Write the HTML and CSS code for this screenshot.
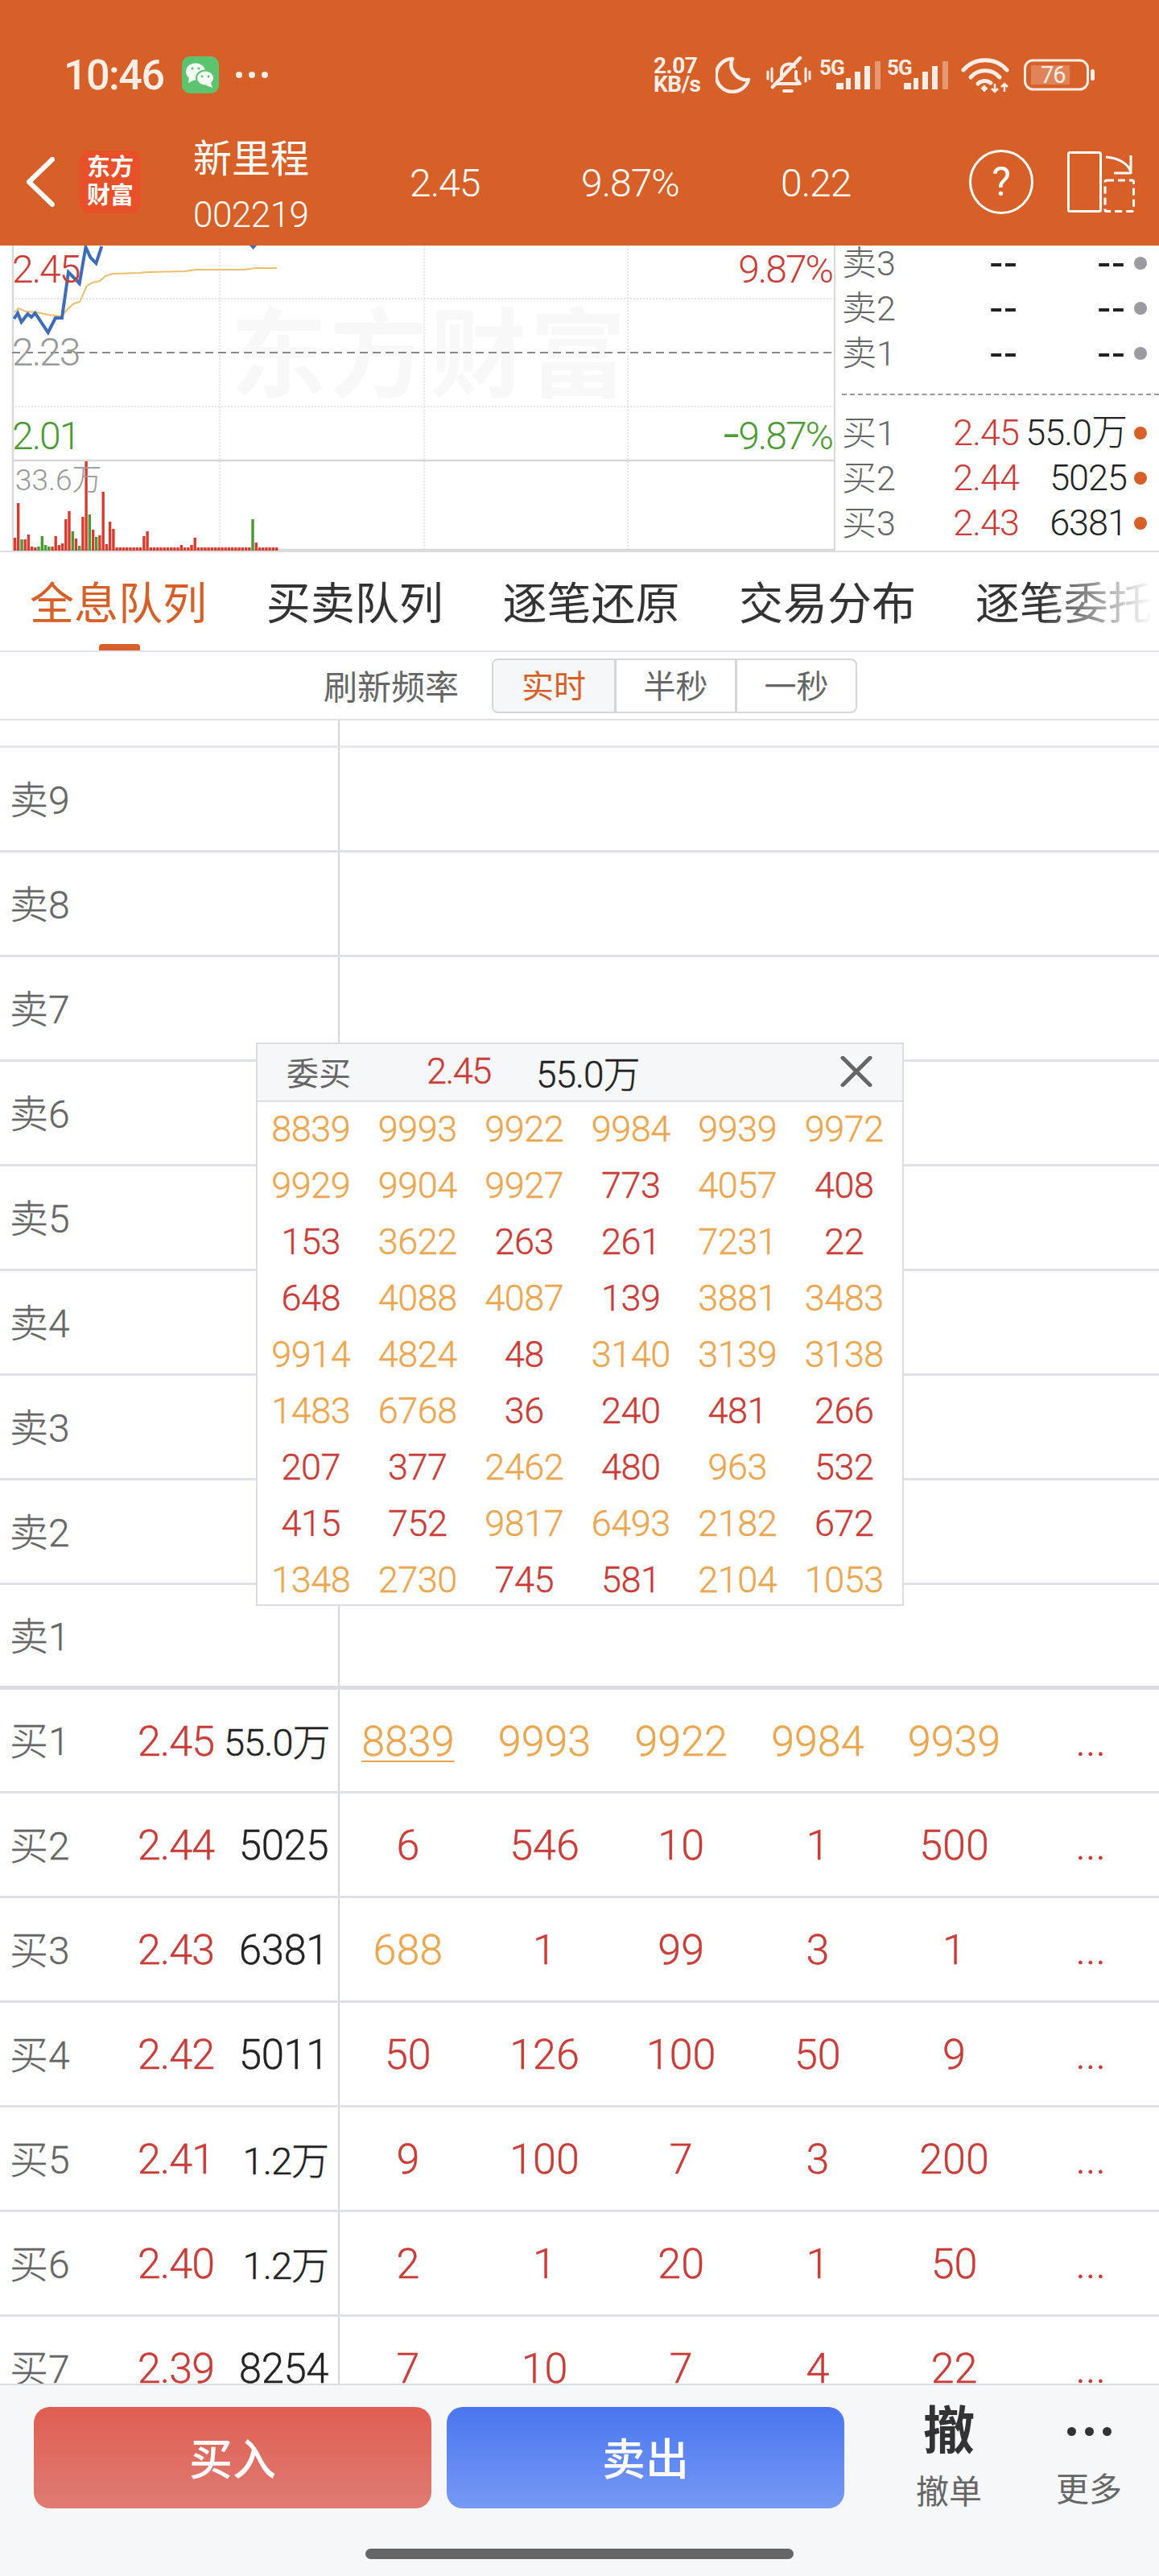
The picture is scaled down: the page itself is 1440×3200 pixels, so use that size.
FILE: index.html
```html
<!DOCTYPE html>
<html lang="zh">
<head>
<meta charset="utf-8">
<title>新里程 002219</title>
<link rel="stylesheet" href="styles.css">
</head>
<body>
<div class="app">
  <header class="header">
    <div class="status">
      <span class="time">10:46</span>
      <svg class="wechat" viewBox="0 0 46 46" width="46" height="46"><rect width="46" height="46" rx="10" fill="#5CC46E"/><ellipse cx="17" cy="19" rx="12" ry="10.5" fill="#F4FBF5"/><path d="M9 26l-1 7 8-4z" fill="#F4FBF5"/><ellipse cx="29" cy="27" rx="11" ry="9.5" fill="#F4FBF5" stroke="#5CC46E" stroke-width="2"/><path d="M36 33l2 6-8-3z" fill="#F4FBF5"/><circle cx="13" cy="15" r="1.6" fill="#5CC46E"/><circle cx="21" cy="15" r="1.6" fill="#5CC46E"/><circle cx="25" cy="25" r="1.4" fill="#5CC46E"/><circle cx="33" cy="25" r="1.4" fill="#5CC46E"/></svg>
      <svg class="more-dots" viewBox="0 0 40 10" width="40" height="10"><circle cx="4" cy="5" r="4"/><circle cx="20" cy="5" r="4"/><circle cx="36" cy="5" r="4"/></svg>
      <div class="speed"><span>2.07</span><span>KB/s</span></div>
      <svg class="moon" viewBox="0 0 44 46" width="44" height="46"><path d="M21 3A20.500 20.500 0 1 0 41 29 A19 19 0 0 1 21 3Z" fill="none" stroke="#FCEEE6" stroke-width="4.500" stroke-linejoin="round"/></svg>
      <svg class="bell" viewBox="0 0 56 46" width="56" height="46" fill="none" stroke="#FCEEE6" stroke-width="4" stroke-linecap="round" stroke-linejoin="round"><path d="M19 28V19a9 9 0 0 1 16-6M37 19v9l5 6H12"/><path d="M42 2L8 38" stroke-width="4.500"/><path d="M22 43h10"/><path d="M2 19v9M7 15v16M49 15v16M54 19v9" stroke-width="3"/></svg>
      <svg class="signal" viewBox="0 0 76 46" width="76" height="46"><text class="net" x="0" y="23">5G</text><path d="M21 33h9v8h-9z" class="sig"/><path d="M33 27h6v14h-6z" class="sig"/><path d="M44 19h7v22h-7z" class="sig"/><path d="M56 12h7v29h-7z" class="sig"/><path d="M69 6h7v35h-7z" class="sig faded"/></svg>
      <svg class="signal second" viewBox="0 0 76 46" width="76" height="46"><text class="net" x="0" y="23">5G</text><path d="M21 33h9v8h-9z" class="sig"/><path d="M33 27h6v14h-6z" class="sig"/><path d="M44 19h7v22h-7z" class="sig"/><path d="M56 12h7v29h-7z" class="sig"/><path d="M69 6h7v35h-7z" class="sig faded"/></svg>
      <svg class="wifi" viewBox="0 0 60 46" width="60" height="46" fill="none" stroke="#FCEEE6" stroke-width="5" stroke-linecap="round"><path d="M3 17a36 36 0 0 1 54 0"/><path d="M12 26a24 24 0 0 1 36 0"/><path d="M21 34a12 12 0 0 1 16-1"/><path d="M29 36l4 4-4 4-4-4z" fill="#FCEEE6" stroke-width="1"/><path d="M42 34v10M54 44V34M50 38l4-4 4 4M38 40l4 4 4-4" stroke-width="2.500" stroke-linecap="butt"/></svg>
      <svg class="battery" viewBox="0 0 88 46" width="88" height="46"><rect x="1.500" y="5" width="78" height="36" rx="10" fill="none" stroke="#FCEEE6" stroke-width="3"/><rect x="9" y="11" width="48" height="24" fill="#FCEEE6" fill-opacity=".25"/><text class="batt" x="21" y="33">76</text><rect x="83" y="16" width="5" height="14" rx="2.500" fill="#FCEEE6"/></svg>
    </div>
    <nav class="nav">
      <svg class="back" viewBox="0 0 36 62" width="36" height="62"><path d="M33 3L4 31l29 28" fill="none" stroke="#fff" stroke-width="6" stroke-linecap="round" stroke-linejoin="round"/></svg>
      <div class="logo"><span>东方</span><span>财富</span></div>
      <div class="name"><span class="stock">新里程</span><span class="code">002219</span></div>
      <span class="nav-num price">2.45</span>
      <span class="nav-num pct">9.87%</span>
      <span class="nav-num chg">0.22</span>
      <svg class="help" viewBox="0 0 80 80" width="80" height="80"><circle cx="40" cy="40" r="38.500" fill="none" stroke="#fff" stroke-width="3"/><text class="help-mark" x="40" y="57">?</text></svg>
      <svg class="split" viewBox="0 0 84 76" width="84" height="76" fill="none" stroke="#fff" stroke-width="3"><rect x="1.500" y="1.500" width="40" height="73" rx="2"/><rect x="47" y="36" width="35.500" height="38.500" rx="2" stroke-dasharray="9 5"/><path d="M48 7c15 1 28 8 31 19M79 5v23M58 27h21"/></svg>
    </nav>
  </header>

  <section class="chart">
    <div class="canvas">
      <div class="watermark">东方财富</div>
      <svg class="plot" viewBox="0 305 1036 379" width="1036" height="379">
        <path class="dotted" d="M15 371H1036M15 505H1036"/>
        <path class="dotted" d="M273 305V684M527 305V684M780 305V684"/>
        <path class="solid-grid" d="M16 572H1036M16 683H1036M16 305V684"/>
        <path class="mid" d="M15 438H1036"/>
        <polyline class="avg" points="18,388 23,383 32,387 46,388 60,391 76,393 85,383 92,377 99,375 108,355 115,351 124,349 131,343 140,340 174,339 184,338 230,337 243,335 303,335 317,333 344,333"/>
        <polyline class="line" points="17.400,396 22,389 26.600,400 34.400,390 39,394 43.600,389 59.700,413 68.900,395 77,395 85,338 98.700,352 106.500,307 112.500,320 119.400,327 126.300,306"/>
        <path class="blip" d="M310 305h9l-4.500 5z"/>
        <path class="vol-r" d="M18.500 684V668M22.700 684V625M31.200 684V670M35.400 684V664M39.600 684V679M43.800 684V680M65 684V679M69.200 684V666M73.400 684V677M77.600 684V675M81.800 684V645M86 684V635M94.500 684V669M102.900 684V642M107.100 684V573M115.600 684V658M123.900 684V665M128.200 684V611M132.400 684V676M136.600 684V648M140.900 684V657M145.100 684V680M149.300 684V680M153.500 684V680M157.700 684V680M162 684V680M166.200 684V680M170.400 684V680M174.600 684V680M178.900 684V666M183.100 684V660M187.300 684V680M191.500 684V680M195.800 684V680M200 684V680M204.200 684V680M208.400 684V680M212.700 684V680M216.900 684V680M221.100 684V680M225.300 684V677M229.500 684V680M233.800 684V680M238 684V677M242.200 684V668M246.400 684V680M250.700 684V680M254.900 684V680M259.100 684V680M263.300 684V680M267.600 684V680M271.800 684V680M276 684V680M280.200 684V680M284.500 684V680M288.700 684V680M292.900 684V680M297.100 684V680M301.300 684V680M305.600 684V680M309.800 684V680M318.300 684V674M322.500 684V680M326.700 684V680M330.900 684V680M335.100 684V680M339.400 684V680M343.600 684V680"/>
        <path class="vol-g" d="M27 684V670M48 684V679M52.300 684V666M56.500 684V677M60.700 684V679M90.300 684V660M98.700 684V678M111.300 684V639M119.700 684V667M314 684V645"/>
      </svg>
      <span class="axis up left-top">2.45</span>
      <span class="axis base left-mid">2.23</span>
      <span class="axis down left-low">2.01</span>
      <span class="axis up right-top">9.87%</span>
      <span class="axis down right-low"><span class="minus">-</span>9.87%</span>
      <span class="vol-label">33.6万</span>
    </div>
    <aside class="book">
      <div class="book-row"><span class="b-label">卖3</span><span class="b-price dash">--</span><span class="b-vol dash">--</span><i class="dot idle"></i></div>
      <div class="book-row"><span class="b-label">卖2</span><span class="b-price dash">--</span><span class="b-vol dash">--</span><i class="dot idle"></i></div>
      <div class="book-row"><span class="b-label">卖1</span><span class="b-price dash">--</span><span class="b-vol dash">--</span><i class="dot idle"></i></div>
      <div class="book-sep"></div>
      <div class="book-row"><span class="b-label">买1</span><span class="b-price">2.45</span><span class="b-vol">55.0万</span><i class="dot live"></i></div>
      <div class="book-row"><span class="b-label">买2</span><span class="b-price">2.44</span><span class="b-vol">5025</span><i class="dot live"></i></div>
      <div class="book-row"><span class="b-label">买3</span><span class="b-price">2.43</span><span class="b-vol">6381</span><i class="dot live"></i></div>
    </aside>
  </section>

  <div class="tabs">
    <span class="tab active">全息队列</span>
    <span class="tab">买卖队列</span>
    <span class="tab">逐笔还原</span>
    <span class="tab">交易分布</span>
    <span class="tab">逐笔委托</span>
  </div>

  <div class="freq">
    <span class="freq-label">刷新频率</span>
    <div class="seg"><span class="seg-item on">实时</span><span class="seg-item">半秒</span><span class="seg-item">一秒</span></div>
  </div>

  <main class="queue">
    <div class="sliver"></div>
    <div class="row"><div class="side"><span class="lab">卖9</span></div></div>
    <div class="row"><div class="side"><span class="lab">卖8</span></div></div>
    <div class="row"><div class="side"><span class="lab">卖7</span></div></div>
    <div class="row"><div class="side"><span class="lab">卖6</span></div></div>
    <div class="row"><div class="side"><span class="lab">卖5</span></div></div>
    <div class="row"><div class="side"><span class="lab">卖4</span></div></div>
    <div class="row"><div class="side"><span class="lab">卖3</span></div></div>
    <div class="row"><div class="side"><span class="lab">卖2</span></div></div>
    <div class="row last-sell"><div class="side"><span class="lab">卖1</span></div></div>

    <div class="row first-buy"><div class="side"><span class="lab">买1</span><span class="pri">2.45</span><span class="vol wan">55.0万</span></div><span class="q a first">8839</span><span class="q a">9993</span><span class="q a">9922</span><span class="q a">9984</span><span class="q a">9939</span><span class="q r">...</span></div>
    <div class="row"><div class="side"><span class="lab">买2</span><span class="pri">2.44</span><span class="vol">5025</span></div><span class="q r">6</span><span class="q r">546</span><span class="q r">10</span><span class="q r">1</span><span class="q r">500</span><span class="q r">...</span></div>
    <div class="row"><div class="side"><span class="lab">买3</span><span class="pri">2.43</span><span class="vol">6381</span></div><span class="q a">688</span><span class="q r">1</span><span class="q r">99</span><span class="q r">3</span><span class="q r">1</span><span class="q r">...</span></div>
    <div class="row"><div class="side"><span class="lab">买4</span><span class="pri">2.42</span><span class="vol">5011</span></div><span class="q r">50</span><span class="q r">126</span><span class="q r">100</span><span class="q r">50</span><span class="q r">9</span><span class="q r">...</span></div>
    <div class="row"><div class="side"><span class="lab">买5</span><span class="pri">2.41</span><span class="vol wan">1.2万</span></div><span class="q r">9</span><span class="q r">100</span><span class="q r">7</span><span class="q r">3</span><span class="q r">200</span><span class="q r">...</span></div>
    <div class="row"><div class="side"><span class="lab">买6</span><span class="pri">2.40</span><span class="vol wan">1.2万</span></div><span class="q r">2</span><span class="q r">1</span><span class="q r">20</span><span class="q r">1</span><span class="q r">50</span><span class="q r">...</span></div>
    <div class="row"><div class="side"><span class="lab">买7</span><span class="pri">2.39</span><span class="vol">8254</span></div><span class="q r">7</span><span class="q r">10</span><span class="q r">7</span><span class="q r">4</span><span class="q r">22</span><span class="q r">...</span></div>

    <div class="popup">
      <div class="pop-head">
        <span class="pop-title">委买</span>
        <span class="pop-price">2.45</span>
        <span class="pop-vol">55.0万</span>
        <svg class="pop-close" viewBox="0 0 40 38" width="40" height="38"><path d="M3 2l34 34M37 2L3 36" fill="none" stroke="#666" stroke-width="5" stroke-linecap="round"/></svg>
      </div>
      <div class="pop-grid">
        <span class="a">8839</span><span class="a">9993</span><span class="a">9922</span><span class="a">9984</span><span class="a">9939</span><span class="a">9972</span>
        <span class="a">9929</span><span class="a">9904</span><span class="a">9927</span><span class="r">773</span><span class="a">4057</span><span class="r">408</span>
        <span class="r">153</span><span class="a">3622</span><span class="r">263</span><span class="r">261</span><span class="a">7231</span><span class="r">22</span>
        <span class="r">648</span><span class="a">4088</span><span class="a">4087</span><span class="r">139</span><span class="a">3881</span><span class="a">3483</span>
        <span class="a">9914</span><span class="a">4824</span><span class="r">48</span><span class="a">3140</span><span class="a">3139</span><span class="a">3138</span>
        <span class="a">1483</span><span class="a">6768</span><span class="r">36</span><span class="r">240</span><span class="r">481</span><span class="r">266</span>
        <span class="r">207</span><span class="r">377</span><span class="a">2462</span><span class="r">480</span><span class="a">963</span><span class="r">532</span>
        <span class="r">415</span><span class="r">752</span><span class="a">9817</span><span class="a">6493</span><span class="a">2182</span><span class="r">672</span>
        <span class="a">1348</span><span class="a">2730</span><span class="r">745</span><span class="r">581</span><span class="a">2104</span><span class="a">1053</span>
      </div>
    </div>
  </main>

  <footer class="bar">
    <div class="actions">
      <button class="btn buy">买入</button>
      <button class="btn sell">卖出</button>
      <div class="act cancel"><span class="act-icon">撤</span><span class="act-label">撤单</span></div>
      <div class="act more"><span class="act-icon dots"><i></i><i></i><i></i></span><span class="act-label">更多</span></div>
    </div>
    <div class="home"></div>
  </footer>
</div>
</body>
</html>
```

FILE: styles.css
```css
* { box-sizing: border-box; }
html, body { margin: 0; padding: 0; }
body { background: #fff; font-family: Roboto, "Noto Sans CJK SC", sans-serif; color: #222; }
.app { width: 1440px; height: 3200px; display: flex; flex-direction: column; overflow: hidden; }

/* header */
.header { height: 305px; background: #D66028; color: #fff; flex: none; position: relative; z-index: 3; }
.status { height: 186px; display: flex; align-items: center; padding: 0 80px 0 79px; color: #FCEEE6; }
.time { font-size: 52px; font-weight: 500; width: 123px; letter-spacing: -1.500px; white-space: nowrap; }
.wechat { margin-left: 24px; }
.more-dots { margin-left: 21px; fill: #FCEEE6; }
.speed { margin-left: auto; width: 65px; display: flex; flex-direction: column; font-weight: 700; font-size: 28px; line-height: 23px; letter-spacing: -.5px; white-space: nowrap; }
.moon { margin-left: 12px; }
.bell { margin-left: 19px; }
.signal { margin-left: 10px; overflow: visible; }
.signal.second { margin-left: 8px; }
.wifi { margin-left: 16px; }
.battery { margin-left: 18px; }
.net { font: 700 26px Roboto, sans-serif; fill: #FCEEE6; letter-spacing: -1px; }
.sig { fill: #FCEEE6; }
.sig.faded { fill-opacity: .4; }
.batt { font: 400 29px Roboto, sans-serif; fill: #FCEEE6; letter-spacing: -1px; }

.nav { display: flex; align-items: center; height: 80px; padding-left: 32px; }
.back { flex: none; }
.logo { margin-left: 31px; width: 76px; height: 78px; border-radius: 14px; background: #E8502A; display: flex; flex-direction: column; align-items: center; justify-content: center; font-size: 29px; line-height: 35px; font-weight: 700; flex: none; }
.name { margin-left: 65px; width: 269px; display: flex; flex-direction: column; margin-top: 8px; }
.stock { font-size: 48px; line-height: 62px; }
.code { font-size: 44px; line-height: 52px; margin-top: 12px; letter-spacing: -.5px; font-weight: 300; }
.nav-num { font-size: 48px; font-weight: 300; letter-spacing: -1px; margin-top: 2px; }
.price { width: 213px; }
.pct { width: 248px; }
.chg { width: 234px; }
.help-mark { font: 400 50px Roboto, sans-serif; fill: #fff; text-anchor: middle; }
.split { margin-left: 42px; }

/* chart */
.chart { height: 381px; display: flex; flex: none; border-bottom: 2px solid #DDD; }
.canvas { position: relative; width: 1036px; height: 379px; flex: none; overflow: hidden; }
.plot { position: absolute; left: 0; top: 0; fill: none; }
.watermark { position: absolute; left: 286px; top: 76px; font-size: 120px; line-height: 124px; letter-spacing: 4px; font-weight: 700; color: #F8F8F8; white-space: nowrap; }
.dotted { stroke: #DDD; stroke-width: 1.500; stroke-dasharray: 2 2; }
.solid-grid { stroke: #D8D8D8; stroke-width: 2.500; }
.mid { stroke: #888; stroke-width: 2; stroke-dasharray: 10 6; }
.avg { stroke: #EDBE6E; stroke-width: 2; }
.line { stroke: #3F6DB5; stroke-width: 4; }
.blip { fill: #3F6DB5; }
.vol-r { stroke: #D93C2F; stroke-width: 3.400; }
.vol-g { stroke: #4C9A34; stroke-width: 3.400; }
.axis { position: absolute; font-size: 48px; line-height: 50px; letter-spacing: -2px; font-weight: 300; white-space: nowrap; }
.minus { font-size: 72px; line-height: 0; vertical-align: -6px; }
.up { color: #C93C37; }
.down { color: #4C9A34; }
.base { color: #999; }
.left-top { left: 15px; top: 5px; }
.left-mid { left: 15px; top: 108px; }
.left-low { left: 15px; top: 212px; }
.right-top { right: 2px; top: 5px; }
.right-low { right: 2px; top: 212px; }
.vol-label { position: absolute; left: 19px; top: 272px; font-size: 37px; line-height: 40px; color: #999; font-weight: 300; }

.book { flex: 1; border-left: 2px solid #D8D8D8; padding-left: 8px; overflow: hidden; }
.book-row { height: 56px; display: flex; align-items: center; font-size: 45px; font-weight: 300; line-height: 50px; }
.book-row:first-child { margin-top: -6px; }
.b-label { width: 120px; color: #666; font-size: 43px; white-space: nowrap; }
.b-price { width: 100px; text-align: right; color: #C93C37; letter-spacing: -1px; }
.b-vol { width: 134px; margin-right: -1px; text-align: right; color: #222; letter-spacing: -1px; white-space: nowrap; font-size: 45px; }
.b-price.dash, .b-vol.dash { color: #222; font-size: 54px; line-height: 40px; font-weight: 400; letter-spacing: 3px; }
.dot { width: 16px; height: 16px; border-radius: 50%; margin-left: 10px; flex: none; }
.dot.idle { background: #9A9AA0; }
.dot.live { background: #D66028; }
.book-sep { margin: 22px 0 19px; border-top: 2px dashed #999; }

/* tabs */
.tabs { height: 124px; flex: none; display: flex; align-items: stretch; gap: 73.700px; padding-left: 37px; border-bottom: 2px solid #E2E2E6; position: relative; overflow: hidden; }
.tabs::after { content: ""; position: absolute; right: 0; top: 0; bottom: 0; width: 150px; background: linear-gradient(to right, rgba(255,255,255,0), #fff 95%); }
.tab { flex: none; width: 220px; font-size: 55px; line-height: 128px; white-space: nowrap; color: #333; position: relative; }
.tab.active { color: #D66028; }
.tab.active::after { content: ""; position: absolute; left: 86px; bottom: 0; width: 51px; height: 8px; border-radius: 4px 4px 0 0; background: #D66028; }

.freq { height: 85px; flex: none; display: flex; align-items: center; padding-left: 402px; gap: 41px; border-bottom: 2px solid #E2E2E6; }
.freq-label { font-size: 42px; color: #666; margin-top: -3px; }
.seg { display: flex; height: 68px; border: 2px solid #D5D6DA; border-radius: 8px; overflow: hidden; }
.seg-item { width: 150px; display: flex; align-items: center; justify-content: center; font-size: 40px; color: #666; border-left: 3px solid #D5D6DA; padding-bottom: 3px; }
.seg-item:first-child { border-left: 0; }
.seg-item.on { color: #D66028; background: #F6F7F9; }

/* queue */
.queue { flex: 1; position: relative; overflow: hidden; }
.sliver { height: 34px; border-bottom: 3px solid #E6E6EA; background: linear-gradient(#D5D6DA, #D5D6DA) 420px 0 / 2px 100% no-repeat; }
.row { height: 130px; display: grid; grid-template-columns: 422px repeat(6, 1fr); align-items: stretch; border-bottom: 3px solid #E0E1E6; }
.row.last-sell { border-bottom: 5px solid #DCDDE2; }
.row.first-buy { height: 129px; }
.side { display: flex; align-items: center; border-right: 2px solid #D5D6DA; padding-left: 12px; padding-right: 12px; }
.lab { color: #666; font-size: 48px; font-weight: 300; -webkit-text-stroke: .3px #666; flex: 1; white-space: nowrap; padding-bottom: 6px; }
.pri { color: #C93C37; font-size: 52px; font-weight: 300; -webkit-text-stroke: .4px #C93C37; letter-spacing: -1px; margin-right: 12px; padding-top: 2px; }
.vol { width: 130px; text-align: right; font-size: 51px; font-weight: 300; -webkit-text-stroke: .4px #222; letter-spacing: -.5px; white-space: nowrap; padding-top: 2px; }
.vol.wan { font-size: 47px; letter-spacing: -1px; padding-top: 0; padding-bottom: 3px; }
.q { display: flex; align-items: center; justify-content: center; font-size: 52px; font-weight: 300; -webkit-text-stroke: .4px; padding-top: 2px; }
.a { color: #EBA74F; }
.r { color: #C93C37; }
.first { text-decoration: underline; text-underline-offset: 6px; text-decoration-thickness: 2px; }

/* popup */
.popup { position: absolute; left: 318px; top: 400px; width: 805px; height: 700px; background: #fff; border: 2px solid #DCDDE2; overflow: hidden; }
.pop-head { height: 72px; display: flex; align-items: center; background: #F6F7F9; border-bottom: 2px solid #DCDDE2; padding-left: 36px; padding-bottom: 3px; }
.pop-title { width: 174px; font-size: 40px; color: #666; white-space: nowrap; }
.pop-price { width: 136px; font-size: 45px; font-weight: 300; -webkit-text-stroke: .4px #C93C37; color: #C93C37; letter-spacing: -1.500px; }
.pop-vol { font-size: 46px; font-weight: 300; -webkit-text-stroke: .4px #222; letter-spacing: -1px; white-space: nowrap; }
.pop-close { margin-left: auto; margin-right: 37px; }
.pop-grid { display: grid; grid-template-columns: repeat(6, 1fr); grid-auto-rows: 70px; align-items: center; justify-items: center; font-size: 45px; font-weight: 300; -webkit-text-stroke: .4px; letter-spacing: -.5px; padding-right: 6px; margin-top: -2px; }

/* bottom */
footer.bar { height: 239px; flex: none; background: #F6F7F9; border-top: 2px solid #DCDDE2; padding-top: 27px; display: flex; flex-direction: column; align-items: center; position: relative; z-index: 2; }
.actions { width: 100%; height: 126px; padding-left: 42px; display: flex; }
.btn { width: 494px; height: 126px; border: 0; border-radius: 20px; color: #fff; font: 500 54px Roboto, "Noto Sans CJK SC", sans-serif; padding: 0 0 4px; }
.buy { background: linear-gradient(#DF5F52, #DF7B72); }
.sell { margin-left: 19px; background: linear-gradient(#4A76EE, #7699F5); }
.act { width: 100px; display: flex; flex-direction: column; align-items: center; }
.cancel { margin-left: 80px; }
.more { margin-left: 74px; }
.act-icon { height: 62px; font-size: 64px; line-height: 62px; font-weight: 700; color: #333; white-space: nowrap; }
.act-label { margin-top: 21px; font-size: 41px; line-height: 46px; color: #666; white-space: nowrap; }
.dots { display: flex; gap: 11px; align-items: center; padding-top: 2px; }
.dots i { width: 11px; height: 11px; border-radius: 50%; background: #333; }
.home { margin-top: 50px; width: 532px; height: 13px; border-radius: 7px; background: #666; }
```
